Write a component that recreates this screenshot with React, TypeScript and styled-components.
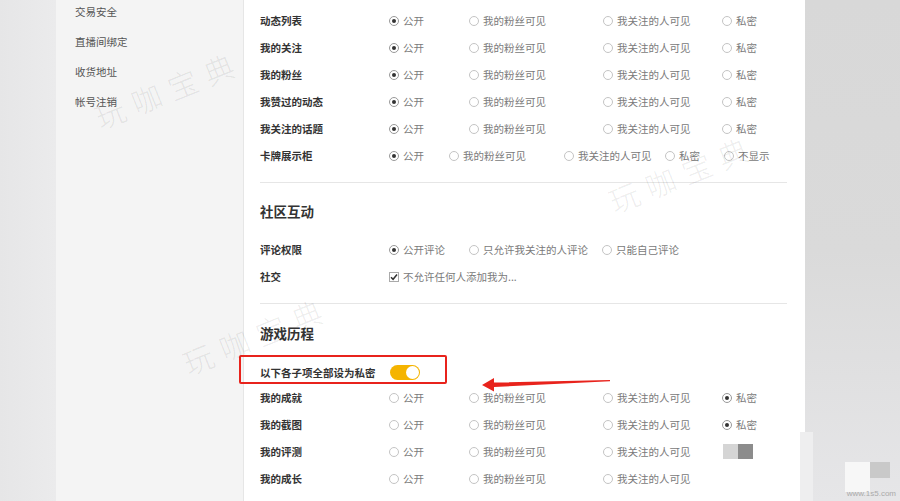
import { FC } from 'react';
import styled, { createGlobalStyle } from 'styled-components';

type Opt = { text: string; checked?: boolean; mosaic?: boolean };

interface RowData {
  label: string;
  opts: Opt[];
}

const STD_COLS = '129px 80px 134px 119px 1fr';
const CARD_COLS = '129px 60px 115px 101px 59px 1fr';
const COMMENT_COLS = '129px 80px 133px 1fr';

const std = (checkedIdx: number, mosaicLast = false, hideLast = false): Opt[] => {
  const names = ['公开', '我的粉丝可见', '我关注的人可见', '私密'];
  return names
    .map((text, i) => ({ text, checked: i === checkedIdx, mosaic: mosaicLast && i === 3 }))
    .filter((_, i) => !(hideLast && i === 3));
};

const privacyRows: RowData[] = [
  { label: '动态列表', opts: std(0) },
  { label: '我的关注', opts: std(0) },
  { label: '我的粉丝', opts: std(0) },
  { label: '我赞过的动态', opts: std(0) },
  { label: '我关注的话题', opts: std(0) },
];

const gameRows: RowData[] = [
  { label: '我的成就', opts: std(3) },
  { label: '我的截图', opts: std(3) },
  { label: '我的评测', opts: std(-1, true) },
  { label: '我的成长', opts: std(-1, false, true) },
];

const menu = ['交易安全', '直播间绑定', '收货地址', '帐号注销'];

const Option: FC<{ opt: Opt }> = ({ opt }) => {
  if (opt.mosaic) {
    return (
      <Mosaic>
        <MosaicCell $c="#d5d5d5" />
        <MosaicCell $c="#8c8c8c" />
      </Mosaic>
    );
  }
  return (
    <OptionWrap>
      <Radio $checked={!!opt.checked} />
      <span>{opt.text}</span>
    </OptionWrap>
  );
};

const SettingRow: FC<{ row: RowData; cols?: string }> = ({ row, cols = STD_COLS }) => (
  <Row $cols={cols}>
    <Label>{row.label}</Label>
    {row.opts.map((o) => (
      <Option key={o.text} opt={o} />
    ))}
  </Row>
);

const App: FC = () => {
  return (
    <>
      <GlobalStyle />
      <Page>
        <Gutter />
        <Sidebar>
          {menu.map((m) => (
            <MenuItem key={m}>{m}</MenuItem>
          ))}
        </Sidebar>
        <Main>
          {privacyRows.map((r) => (
            <SettingRow key={r.label} row={r} />
          ))}
          <SettingRow
            cols={CARD_COLS}
            row={{
              label: '卡牌展示柜',
              opts: [
                { text: '公开', checked: true },
                { text: '我的粉丝可见' },
                { text: '我关注的人可见' },
                { text: '私密' },
                { text: '不显示' },
              ],
            }}
          />
          <Divider />
          <Heading>社区互动</Heading>
          <SettingRow
            cols={COMMENT_COLS}
            row={{
              label: '评论权限',
              opts: [{ text: '公开评论', checked: true }, { text: '只允许我关注的人评论' }, { text: '只能自己评论' }],
            }}
          />
          <Row $cols="129px 1fr">
            <Label>社交</Label>
            <OptionWrap>
              <Checkbox>
                <svg width="8" height="8" viewBox="0 0 8 8">
                  <path d="M1 4.2 L3.1 6.3 L7 1.6" fill="none" stroke="#333" strokeWidth="1.5" />
                </svg>
              </Checkbox>
              <span>不允许任何人添加我为...</span>
            </OptionWrap>
          </Row>
          <Divider />
          <Heading $gap={19}>游戏历程</Heading>
          <HighlightBox>
            <Label>以下各子项全部设为私密</Label>
            <Toggle>
              <Knob />
            </Toggle>
          </HighlightBox>
          {gameRows.map((r) => (
            <SettingRow key={r.label} row={r} />
          ))}
        </Main>
        <RightGutter />

        <Arrow width="140" height="22" viewBox="0 0 140 22">
          <polygon points="4,11 16,4 16,8.5 132,6 132,7.2 16,13 16,17.5" fill="#e8231c" />
        </Arrow>
        <Watermark $x={96} $y={96}>玩咖宝典</Watermark>
        <Watermark $x={610} $y={180}>玩咖宝典</Watermark>
        <Watermark $x={184} $y={342}>玩咖宝典</Watermark>
        <Blur $x={800} $y={432} $w={13} $h={69} $c="#eeeeef" />
        <Blur $x={845} $y={462} $w={25} $h={30} $c="#f7f7f7" />
        <Blur $x={870} $y={462} $w={20} $h={16} $c="#c9c9c9" />
        <SiteMark>www.1s5.com</SiteMark>
      </Page>
    </>
  );
};

export default App;

const GlobalStyle = createGlobalStyle`
  html, body {
    margin: 0;
    padding: 0;
    overflow: hidden;
  }
  body {
    font-family: "Noto Sans CJK SC", "Liberation Sans", sans-serif;
  }
`;

const Page = styled.div`
  position: relative;
  display: flex;
  width: 900px;
  height: 501px;
  overflow: hidden;
  background: #fff;
`;

const Gutter = styled.div`
  width: 56px;
  flex-shrink: 0;
  background: linear-gradient(90deg, #e6e6e7, #ebebec);
`;

const Sidebar = styled.div`
  width: 188px;
  flex-shrink: 0;
  background: #f4f4f4;
  border-right: 1px solid #e6e6e6;
  padding-left: 19px;
  box-sizing: border-box;
`;

const MenuItem = styled.div`
  height: 30px;
  line-height: 30px;
  font-size: 10.5px;
  color: #555;
  &:first-child {
    margin-top: -3px;
  }
`;

const Main = styled.div`
  width: 561px;
  flex-shrink: 0;
  padding: 7px 18px 0 16px;
  box-sizing: border-box;
  background: #fff;
`;

const RightGutter = styled.div`
  flex: 1;
  background: linear-gradient(180deg, #d8d8d8 0%, #dadada 50%, #e6e6e8 100%);
`;

const Row = styled.div<{ $cols: string }>`
  display: grid;
  grid-template-columns: ${(p) => p.$cols};
  align-items: center;
  height: 27px;
`;

const Label = styled.div`
  font-size: 10.5px;
  font-weight: bold;
  color: #333;
  white-space: nowrap;
`;

const OptionWrap = styled.div`
  display: flex;
  align-items: center;
  font-size: 10.5px;
  color: #7a7a7a;
  white-space: nowrap;
`;

const Radio = styled.span<{ $checked: boolean }>`
  width: 10px;
  height: 10px;
  box-sizing: border-box;
  border-radius: 50%;
  border: 1px solid ${(p) => (p.$checked ? '#999' : '#c4c4c4')};
  margin-right: 4px;
  flex-shrink: 0;
  display: flex;
  align-items: center;
  justify-content: center;
  &::after {
    content: '';
    width: 4px;
    height: 4px;
    border-radius: 50%;
    background: ${(p) => (p.$checked ? '#333' : 'transparent')};
  }
`;

const Checkbox = styled.span`
  width: 10px;
  height: 10px;
  box-sizing: border-box;
  border: 1px solid #aaa;
  margin-right: 4px;
  display: flex;
  align-items: center;
  justify-content: center;
`;

const Mosaic = styled.div`
  display: flex;
  margin-left: 1px;
`;

const MosaicCell = styled.span<{ $c: string }>`
  width: 15px;
  height: 15px;
  background: ${(p) => p.$c};
`;

const Divider = styled.div`
  height: 1px;
  background: #e6e6e6;
  margin: 13px 0 0;
`;

const Heading = styled.div<{ $gap?: number }>`
  margin-top: ${(p) => p.$gap ?? 18}px;
  margin-bottom: 15px;
  height: 20px;
  line-height: 20px;
  font-size: 13.5px;
  font-weight: bold;
  color: #333;
`;

const HighlightBox = styled.div`
  display: flex;
  align-items: center;
  gap: 14px;
  width: 208px;
  height: 29px;
  box-sizing: border-box;
  margin-left: -21px;
  margin-top: -3px;
  padding: 5px 0 0 19px;
  border: 2px solid #e8231c;
  border-radius: 2px;
`;

const Toggle = styled.div`
  width: 30px;
  height: 15px;
  border-radius: 8px;
  background: #f5b400;
  display: flex;
  align-items: center;
  justify-content: flex-end;
  padding-right: 1px;
  box-sizing: border-box;
`;

const Knob = styled.span`
  width: 13px;
  height: 13px;
  border-radius: 50%;
  background: #fff;
`;

const Arrow = styled.svg`
  position: absolute;
  left: 478px;
  top: 374px;
`;

const Watermark = styled.div<{ $x: number; $y: number }>`
  position: absolute;
  left: ${(p) => p.$x}px;
  top: ${(p) => p.$y}px;
  font-size: 30px;
  font-weight: 300;
  letter-spacing: 9px;
  color: rgba(0, 0, 0, 0.08);
  transform: rotate(-22deg);
  transform-origin: left center;
  pointer-events: none;
  white-space: nowrap;
`;

const Blur = styled.div<{ $x: number; $y: number; $w: number; $h: number; $c: string }>`
  position: absolute;
  left: ${(p) => p.$x}px;
  top: ${(p) => p.$y}px;
  width: ${(p) => p.$w}px;
  height: ${(p) => p.$h}px;
  background: ${(p) => p.$c};
`;

const SiteMark = styled.div`
  position: absolute;
  right: 4px;
  bottom: 3px;
  font-size: 8px;
  color: #aaa;
  font-family: "Liberation Sans", sans-serif;
`;
